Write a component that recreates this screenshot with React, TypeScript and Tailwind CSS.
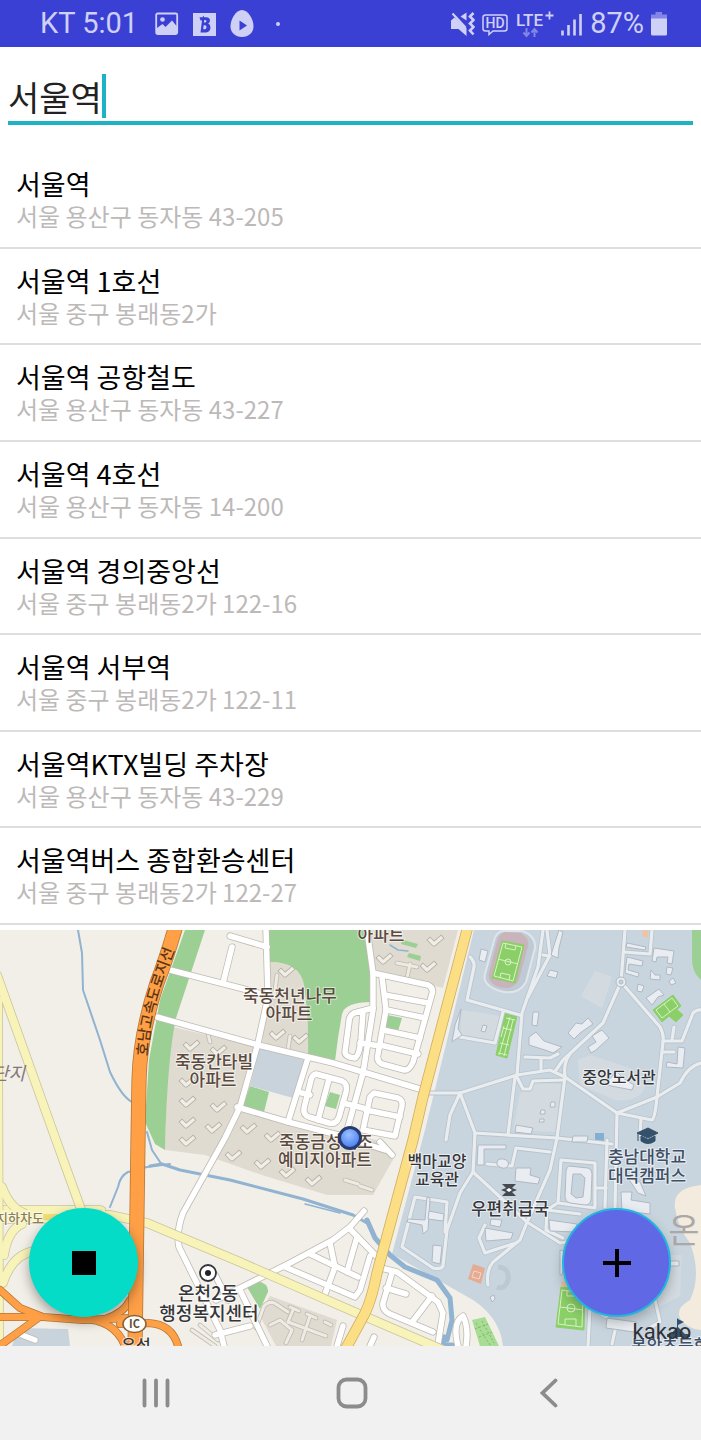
import { useState } from "react";

type Place = { name: string; address: string };

const places: Place[] = [
  { name: "서울역", address: "서울 용산구 동자동 43-205" },
  { name: "서울역 1호선", address: "서울 중구 봉래동2가" },
  { name: "서울역 공항철도", address: "서울 용산구 동자동 43-227" },
  { name: "서울역 4호선", address: "서울 용산구 동자동 14-200" },
  { name: "서울역 경의중앙선", address: "서울 중구 봉래동2가 122-16" },
  { name: "서울역 서부역", address: "서울 중구 봉래동2가 122-11" },
  { name: "서울역KTX빌딩 주차장", address: "서울 용산구 동자동 43-229" },
  { name: "서울역버스 종합환승센터", address: "서울 중구 봉래동2가 122-27" },
];

function StatusBar() {
  return (
    <header className="flex h-[47px] shrink-0 items-center justify-between bg-[#3b40d4] pr-[34px] pl-10 font-[Roboto,'Noto_Sans_CJK_KR',sans-serif] text-[29px] text-[#cfd0f6]">
      <div className="flex items-center gap-[14px]">
        <span className="pr-[3px]">KT 5:01</span>
        <svg width="24" height="24" viewBox="0 0 24 24" fill="none" aria-hidden="true">
          <rect x="1.2" y="1.5" width="21" height="20.5" rx="1.5" stroke="currentColor" strokeWidth="1.8" />
          <path d="M2 16l5.500-4 3 3L17 8.500l5 6V21H2z" fill="currentColor" />
          <circle cx="7.500" cy="7.500" r="2.300" fill="currentColor" />
        </svg>
        <svg width="23" height="24" viewBox="0 0 23 24" aria-hidden="true">
          <path d="M0 1h23v23H0z" fill="currentColor" />
          <path
            d="M6.500 5.200h3l1-1.700.6 1.700h2.400c4 0 4.500 4.800 1.700 6.300 3.500 1.500 3 8.900-2 8.900H7.500L9 8.500H7.500z M11.300 8l-.4 2.500h1.300c1.600 0 1.700-2.500.2-2.500z M10.700 13.200l-.5 4h1.600c2.200 0 2.300-4 .2-4z"
            fill="#3b40d4"
            fillRule="evenodd"
          />
        </svg>
        <svg width="24" height="29" viewBox="0 0 24 29" aria-hidden="true">
          <path d="M12 1C6 1 .5 10 .5 17.300.5 24 5.500 28 12 28s11.500-4 11.500-10.700C23.500 10 18 1 12 1z" fill="currentColor" />
          <path d="M9.500 11.500v10l7.500-5z" fill="#3b40d4" />
        </svg>
        <span className="ml-2 size-1 rounded-full bg-current" />
      </div>
      <div className="flex items-center gap-[7px]">
        <svg width="25" height="26" viewBox="0 0 25 26" fill="none" stroke="currentColor" aria-hidden="true">
          <path d="M1 9.500L4.500 6.500L16.500 17v8L8.500 18H1z M10.500 5.500L16.500 1.500v8z" fill="currentColor" stroke="none" />
          <path d="M2.500 2.500l13 14" strokeWidth="2.200" />
          <path d="M23.500 2l-3.500 3.500 3.500 3.500-3.500 3.500 3.500 3.500-3.500 3.500 3.500 4" strokeWidth="2.600" />
        </svg>
        <svg width="26" height="24" viewBox="0 0 26 24" fill="none" stroke="currentColor" aria-hidden="true">
          <path d="M3.500 3h19q2.500 0 2.500 2.500v11q0 2.500-2.500 2.500H11l-4 3.500V19H3.500Q1 19 1 16.500v-11Q1 3 3.500 3z" strokeWidth="1.500" />
          <text x="13" y="16" textAnchor="middle" fontSize="14" fontWeight="500" fill="currentColor" stroke="none">
            HD
          </text>
        </svg>
        <svg width="39" height="28" viewBox="0 0 39 28" aria-hidden="true">
          <text x="1" y="16" fontSize="17" fontWeight="500" fill="currentColor">
            LTE
          </text>
          <path d="M30.500 5.500h8M34.500 1.500v8" stroke="currentColor" strokeWidth="1.800" />
          <path d="M11.500 18v8M8.500 22.500l3 3.500 3-3.500M19.500 27v-8M16.500 22.500l3-3.500 3 3.500" stroke="#8285e6" strokeWidth="2" fill="none" />
        </svg>
        <svg width="22" height="24" viewBox="0 0 22 24" aria-hidden="true">
          <path d="M1.500 18.500v5M7.500 13v10.500M13.500 7.500v16M19.500 2v21.500" stroke="currentColor" strokeWidth="2.600" />
        </svg>
        <span>87%</span>
        <svg width="16" height="25" viewBox="0 0 16 25" aria-hidden="true">
          <path d="M4.500 1h6.500v2.500h5V8H0V3.500h4.500z" fill="#8285e6" />
          <path d="M0 7.500h16V23q0 1.500-1.500 1.500h-13Q0 24.500 0 23z" fill="currentColor" />
        </svg>
      </div>
    </header>
  );
}

const parks = [
  "M185 930H205L176 1018Q167 1060 165 1150L155 1144L145 1122L149 1060L160 1000Z",
  "M268 930H367L372 1002Q345 1002 342 1014L338 1038L335 1061L308 1057Q309 1020 304 985Q300 962 270 962Z",
  "M387 1015L402 1018L398 1031L385 1027Z",
  "M250 1086L269 1092L264 1112L243 1106Z",
  "M330 1092L340 1095L336 1109L325 1106Z",
  "M247 1287L258 1281Q269 1284 268 1292L260 1309Z",
  "M692 930H701V980Q691 972 692 955Z",
];

const estates = [
  "M173 1027L257 1047L238 1108L385 1142L394 1158L373 1195L327 1195L262 1175L205 1155L165 1150L167 1080Z",
  "M270 962Q300 962 304 985L310 1056L262 1045Z",
  "M368 930H458L443 988L373 971Z",
  "M270 1296L337 1320L331 1346H276L259 1314Z",
];

const lightRoads = [
  "M170 970L240 988L265 995",
  "M232 947L223 983",
  "M230 936L267 947",
  "M266 930L268 997L258 1043L240 1107L225 1138L183 1213Q176 1232 179 1247L220 1330L224 1346",
  "M157 1017L258 1045L333 1063L423 1090",
  "M367 930L373 973V1010L363 1073L346 1134",
  "M373 973L428 985Q434 988 432 994L413 1062Q409 1071 404 1070L382 1064Q376 1061 378 1054L386 1010L382 977",
  "M385 995L428 1003",
  "M387 1010L425 1018",
  "M383 1030L420 1038",
  "M380 1045L418 1054",
  "M373 1008L354 1013Q349 1016 349 1022L345 1052Q345 1057 355 1058Q359 1056 361 1040L363 1012",
  "M360 1043L380 1046",
  "M308 1058L288 1122",
  "M237 1107L288 1122L342 1136L385 1150",
  "M316 1074L342 1081Q348 1084 346 1092L339 1117Q336 1125 329 1123L309 1117Q303 1115 304 1108L311 1080Q312 1075 316 1074Z",
  "M329 1079L318 1120",
  "M298 1092L310 1095",
  "M343 1103L363 1108",
  "M374 1093L398 1098Q403 1100 402 1106L395 1136L363 1130L370 1097Z",
  "M366 1110L400 1117",
  "M380 1142L392 1155",
  "M216 1300L290 1263L333 1240L350 1227L364 1211",
  "M350 1229L378 1258",
  "M357 1237L347 1272",
  "M330 1243L335 1267L325 1294",
  "M310 1254L358 1277",
  "M285 1267L355 1297L360 1290L370 1256",
  "M377 1267L397 1272L438 1302L443 1313L438 1344",
  "M392 1273L383 1303Q382 1310 390 1314L433 1332",
  "M386 1288L406 1294",
  "M432 1296L413 1321",
  "M343 1326L337 1346",
  "M374 1337L370 1346",
  "M240 1290L267 1346",
  "M215 1335L250 1326",
  "M215 1275L228 1300",
  "M22 1335L35 1340",
  "M458 1346Q452 1322 463 1316Q469 1328 466 1346",
];

const estateRoads = [
  "M256 1328L264 1306Q270 1300 276 1304L288 1312",
  "M270 1325L280 1320L292 1330L286 1343",
  "M290 1307L299 1311M307 1314L316 1318M325 1322L331 1325",
  "M288 1322L326 1336",
  "M293 1310L288 1322M310 1316L302 1340",
  "M192 1330L215 1346M200 1325L218 1340",
  "M277 975L274 998M210 1042L207 1030M288 1050L290 1036M407 978L410 964",
  "M397 963L417 967M345 1180L358 1184M360 1186L372 1190",
];

const campusRoads = [
  "M470 957Q475 962 474 967L467 1000L520 1015",
  "M543 930L538 967L522 1013L517 1075",
  "M547 930L550 955L528 997",
  "M543 955L550 956",
  "M625 930L621 982L603 1023L563 1060L556 1070",
  "M621 982L660 1027Q664 1034 663 1042L657 1097Q655 1118 652 1120L617 1113L565 1077L550 1070L517 1075L460 1093L428 1093",
  "M570 1054Q563 1063 565 1077L557 1138",
  "M460 1093L475 1133L507 1135L557 1138L612 1144",
  "M515 1077L508 1135",
  "M617 1113L615 1207",
  "M617 1113L657 1097L680 1083Q688 1066 701 1063",
  "M663 1041H682L693 1013Q697 1009 701 1010",
  "M517 1077L523 1089H530L533 1081L563 1080",
  "M525 1057L550 1058L558 1054M541 1058V1069",
  "M624 952L650 954L652 930",
  "M460 1037L495 1043L503 1012",
  "M674 1027L672 1040",
  "M663 1052H674",
  "M641 1119L640 1135",
  "M460 1093L450 1115L446 1140",
  "M475 1133L473 1172L460 1193L447 1230L443 1266Q441 1270 433 1268L402 1247L415 1197L447 1202L445 1232",
  "M473 1172L527 1222L560 1243L580 1240",
  "M527 1222L520 1240L493 1262Q486 1270 488 1285",
  "M557 1138L550 1170L528 1220",
  "M485 1225L479 1238L485 1253L500 1248L516 1243",
  "M487 1164L512 1166L516 1148L550 1152",
  "M561 1160L595 1163V1208L558 1203Z",
  "M596 1188H606",
  "M547 1207L546 1230L563 1238",
  "M556 1204L547 1210L580 1214",
  "M607 1140L605 1207",
  "M588 1346L590 1308L607 1317",
  "M612 1344L616 1326",
  "M655 1300L660 1322L646 1330",
];

const buildings = [
  "M481 949L488 951L485 962L479 960Z",
  "M627 943L646 947L645 950L626 947Z",
  "M627 957L643 961L642 966L629 964L628 970L639 973L638 977L625 973Z",
  "M654 948L674 951L672 964L667 963L668 957L657 957L656 962L652 961Z",
  "M651 970L655 975L660 975V980L650 979Z",
  "M667 967L673 968L671 975L666 974Z",
  "M669 981L673 978L676 983L671 985Z",
  "M638 984L644 986L642 992L637 991Z",
  "M559 930L563 932L559 948L558 958L551 955L555 942Z",
  "M550 970L558 972L556 978L547 976Z",
  "M533 1012L539 1012L537 1026L532 1025Z",
  "M529 1037L536 1032L544 1041L562 1047L553 1053L545 1050L529 1045Z",
  "M568 1033L576 1023L582 1024L588 1018L593 1024L580 1033L574 1039Z",
  "M592 1036L602 1030L609 1038L596 1050L591 1053L588 1047L596 1042Z",
  "M646 998L659 989L664 995L658 997L652 1005Z",
  "M678 1047L685 1048L683 1068L666 1067L667 1062L677 1064Z",
  "M606 1084L616 1071L623 1078L634 1085L632 1090L611 1086Z",
  "M516 1125L533 1128L531 1134L515 1132Z",
  "M551 1102H555V1107H550ZM541 1110H545V1114H540ZM540 1119H544V1122H539Z",
  "M483 1025L487 1026L485 1032L481 1031Z",
  "M455 1025L461 1009L458 1029L462 1035L452 1042Z",
  "M573 1136H588L587 1142H572Z",
  "M478 1145H506V1149H484V1165L477 1165Z",
  "M497 1165Q496 1158 503 1159Q510 1160 508 1166Q504 1171 497 1165Z",
  "M516 1168L531 1168L530 1175L540 1178L538 1184L515 1181Z",
  "M621 1192L632 1192L631 1200L650 1203L650 1214L622 1211Z",
  "M628 1178L640 1182L646 1196L638 1193Z",
  "M549 1220L577 1224L575 1232L550 1231Z",
  "M485 1228L513 1233L511 1239L486 1241Z",
  "M491 1219L502 1220L500 1227L490 1225Z",
  "M560 1250L566 1252L562 1275L560 1275Z",
  "M670 1261H679V1266H670Z",
  "M427 1197L430 1198L428 1230L423 1234L422 1225L407 1222L408 1219L425 1220Z",
  "M429 1211L444 1214L443 1221L428 1219Z",
  "M433 1245L442 1246L440 1264L432 1262Z",
  "M490 1297L494 1295L495 1299L492 1302Z",
  "M607 1318L636 1322L634 1332L606 1328Z",
];

const blocks = [
  [191, 1047], [218, 1052], [187, 1083], [187, 1103], [218, 1108], [187, 1124], [213, 1129],
  [286, 973], [277, 1036], [300, 1040], [384, 960], [428, 968], [435, 942], [248, 1130],
  [272, 1138], [187, 1142], [233, 1157], [262, 1165], [287, 1174], [313, 1182],
];

const streams = [
  "M78 930L82 953L83 990L100 1040L110 1072Q122 1097 132 1102",
  "M147 1132L152 1150L162 1165M110 1207L118 1187Q120 1176 128 1172L147 1167L170 1164",
];

const ramps = [
  "M0 1290L20 1308L43 1317L83 1320L130 1318",
  "M0 1317H40",
  "M2 1344L38 1318",
  "M83 1319Q115 1320 125 1346",
  "M130 1300Q124 1313 105 1319",
  "M120 1324L148 1323Q172 1324 178 1346",
];

type LabelProps = { x: number; y: number; size?: number; color?: string; children: string };

function Label({ x, y, size = 17, color = "#5a4a3d", children }: LabelProps) {
  return (
    <text
      x={x}
      y={y}
      fontSize={size}
      fill={color}
      textAnchor="middle"
      fontWeight="500"
      stroke="#ffffff"
      strokeOpacity="0.6"
      strokeWidth="2"
      strokeLinejoin="round"
      paintOrder="stroke"
    >
      {children}
    </text>
  );
}

type RoadsProps = { paths: string[]; width: number; fill: string; edge: string };

function Roads({ paths, width, fill, edge }: RoadsProps) {
  return (
    <g fill="none" strokeLinecap="round" strokeLinejoin="round">
      {paths.map((d) => (
        <path key={d} d={d} stroke={edge} strokeWidth={width + 1.6} />
      ))}
      {paths.map((d) => (
        <path key={d} d={d} stroke={fill} strokeWidth={width} />
      ))}
    </g>
  );
}

function MapDrawing() {
  return (
    <svg
      viewBox="0 930 701 416"
      className="block w-full font-['Noto_Sans_CJK_KR',sans-serif]"
      role="img"
      aria-label="지도"
    >
      <path d="M0 930H701V1346H0Z" fill="#f2efe8" />
      <path d="M474 930H701V1346H503Q500 1318 473 1300L392 1254L425 1130Z" fill="#c9d5de" />
      <path d="M701 1185Q672 1188 675 1208Q678 1228 690 1243Q702 1275 690 1300Q674 1309 681 1320Q688 1329 701 1330Z" fill="#f3ebdd" />
      <path d="M595 971L612 977L602 1008L581 996ZM536 1083L561 1084L555 1132L513 1130L520 1094ZM462 1010L500 1016L493 1040L460 1034ZM578 1060L590 1055L630 1068L645 1087Q640 1102 615 1100L580 1085Z" fill="#d3dbe1" />
      <path d="M664 1255H682L680 1296L650 1312L630 1305Z" fill="#d3dbe1" />
      {estates.map((d) => (
        <path key={d} d={d} fill="#dfdbd1" />
      ))}
      {parks.map((d) => (
        <path key={d} d={d} fill="#9ccf93" />
      ))}
      <path d="M260 1047L305 1060L293 1098L250 1086Z" fill="#c8d3dc" />
      <path d="M18 1328L68 1329L70 1346H12Z" fill="#c8d3dc" />

      <g fill="none" stroke="#8fb3d1" strokeLinecap="round" strokeLinejoin="round">
        {streams.map((d) => (
          <path key={d} d={d} strokeWidth="2" />
        ))}
        <path d="M150 1166L162 1164L180 1170L230 1180L303 1199L353 1215L367 1223" strokeWidth="3" />
        <path d="M367 1220L375 1238L390 1255L405 1267L437 1280L450 1298L452 1320L447 1340" strokeWidth="5" />
        <path d="M305 1204L340 1213M390 945L398 950L408 951" strokeWidth="1.500" />
        <path d="M444 1338L440 1346H452" strokeWidth="7" />
      </g>

      <g fill="none" strokeLinejoin="round" strokeLinecap="square">
        {blocks.map(([x, y]) => (
          <g key={`${x}-${y}`} transform={`translate(${x} ${y})`}>
            <path d="M-5 -2L-1 2L6 -4" stroke="#b7b1a6" strokeWidth="5" />
            <path d="M-5 -2L-1 2L6 -4" stroke="#f1eee8" strokeWidth="3.200" />
          </g>
        ))}
      </g>
      <Roads paths={estateRoads} width={3} fill="#eeebe4" edge="#c0bbb1" />
      <path d="M403 940L418 944L416 948L401 944ZM409 953L421 956L420 961L407 957Z" fill="#9ccf93" />

      <path d="M503 931L522 931Q536 936 535 948L526 982Q518 996 500 991Q482 985 485 974L494 941Q496 932 503 931Z" fill="#bfcad4" stroke="#dfe5ea" strokeWidth="2" />
      <path d="M505 932L520 933Q529 937 528 946L519 979Q514 991 499 987Q487 983 489 973L497 942Q499 934 505 932Z" fill="#c8b4ba" />
      <g fill="#8bcf68" stroke="#8bcf68">
        <path d="M502 941L524 945L515 983L492 978Z" />
        <path d="M505 1013L517 1016L507 1058L496 1055Z" />
        <path d="M653 1010L673 995L681 1006L662 1022ZM675 1008L683 1015L676 1022L669 1016Z" />
        <path d="M561 1287L585 1290L584 1330L556 1327Z" />
      </g>
      <path d="M472 1320L485 1317L499 1346H480Z" fill="#a9dc94" />
      <g fill="none" stroke="#d9f2c5" strokeWidth="1">
        <path d="M503 943L522 947L513 981L494 976ZM498 959L518 964M506 943L505 948L515 950L516 946M500 978L501 973L510 975L509 980" />
        <circle cx="508" cy="962" r="3" />
        <path d="M562 1290L583 1293L582 1327L558 1324ZM560 1307L583 1310M567 1291V1296H577V1292M565 1325V1319H576V1326" />
        <circle cx="571" cy="1308" r="4" />
        <path d="M656 1010L672 998L678 1006L662 1018ZM664 1004L670 1012" />
        <path d="M506 1018L515 1020M503 1028L512 1030M500 1043L509 1045M498 1053L507 1055M510 1017L499 1055M504 1026L501 1037M513 1020L504 1056" />
        <path d="M476 1323L490 1345M482 1321L494 1343M475 1329L488 1324M479 1337L492 1332" stroke="#77ba66" strokeDasharray="2 2" />
      </g>
      <path d="M473 1264L485 1268L481 1284L468 1279Z" fill="#e5ac93" />
      <path d="M474 1271L481 1273L479 1279L472 1277Z" fill="none" stroke="#f4d6c8" />
      <path d="M498 1267Q510 1268 508 1280Q505 1290 497 1287" fill="none" stroke="#bec8d2" strokeWidth="5" />
      <path d="M595 1133H604V1141H595Z" fill="#85aed4" />
      <path d="M643 930H648V937H642Z" fill="#efc3a8" />
      <path d="M561 1282L567 1281V1287H561Z" fill="#e5c5ac" />

      <Roads paths={campusRoads} width={3.2} fill="#e9edf0" edge="#b9c4cc" />
      <g fill="#e9edf1" stroke="#afb9c4" strokeWidth="1">
        {buildings.map((d) => (
          <path key={d} d={d} />
        ))}
        <circle cx="621" cy="982" r="5" />
        <circle cx="621" cy="982" r="2" fill="#c9d5de" />
        <path d="M569 1166L588 1168Q592 1169 592 1174L591 1200Q590 1205 585 1205L570 1203Q565 1201 565 1196L566 1171Q567 1166 569 1166ZM573 1174L571 1194L576 1198L583 1197L585 1178L581 1174Z" fillRule="evenodd" />
      </g>

      <Roads paths={lightRoads} width={5.5} fill="#ffffff" edge="#bfbbb5" />
      <Roads
        paths={["M0 1217H100", "M0 1212H100"]}
        width={12}
        fill="#f8f3b8"
        edge="#cbc59d"
      />
      <Roads
        paths={[
          "M-2 1000L-1 1346",
          "M-3 975L56 1140L82 1212",
          "M2 1187Q10 1208 24 1213",
          "M4 1255Q8 1230 22 1224",
          "M3 1283Q12 1255 34 1251",
          "M80 1214L110 1215L147 1223L240 1262L343 1307L443 1350",
        ]}
        width={8}
        fill="#f8f3b8"
        edge="#cbc59d"
      />
      <path d="M0 1210H105V1221H0Z" fill="#f8f3b8" />
      <path d="M43 1217H82" stroke="#f2df7a" strokeWidth="6" />
      <Roads
        paths={["M468 926L423 1097L413 1140L377 1273Q371 1303 363 1317L345 1350"]}
        width={9.5}
        fill="#fcdf84"
        edge="#cfae60"
      />
      <Roads paths={ramps} width={6.5} fill="#ff9f46" edge="#b77735" />
      <Roads
        paths={["M177 922Q167 957 157 983Q140 1035 139 1080L138 1140L135 1350"]}
        width={13.5}
        fill="#ff9f46"
        edge="#b77735"
      />

      <path id="expressway" d="M148 1056Q149 1012 177 944" fill="none" />
      <text fontSize="15" fill="#5b3517" fontWeight="500">
        <textPath href="#expressway">호남고속도로지선</textPath>
      </text>

      <Label x={381} y={941}>아파트</Label>
      <Label x={290} y={1002}>죽동천년나무</Label>
      <Label x={289} y={1020}>아파트</Label>
      <Label x={214} y={1068}>죽동칸타빌</Label>
      <Label x={213} y={1086}>아파트</Label>
      <Label x={326} y={1148}>죽동금성백조</Label>
      <Label x={325} y={1166}>예미지아파트</Label>
      <Label x={437} y={1167} size={16} color="#35363a">백마교양</Label>
      <Label x={437} y={1185} size={16} color="#35363a">교육관</Label>
      <Label x={510} y={1215} color="#35363a">우편취급국</Label>
      <Label x={619} y={1083} size={16} color="#35363a">중앙도서관</Label>
      <Label x={647} y={1163} color="#3d5068">충남대학교</Label>
      <Label x={647} y={1182} color="#3d5068">대덕캠퍼스</Label>
      <Label x={208} y={1300} size={18} color="#35363a">온천2동</Label>
      <Label x={209} y={1320} size={18} color="#35363a">행정복지센터</Label>
      <Label x={20} y={1223} size={13} color="#8b8055">지하차도</Label>
      <Label x={136} y={1351} size={16} color="#35363a">유성</Label>
      <Label x={678} y={1352} size={17} color="#3d5068">봉암초등학교</Label>
      <text x="25" y="1080" fontSize="18" fill="#85777a" textAnchor="end" fontStyle="italic">단지</text>
      <text x="684" y="1243" fontSize="34" fill="#aaa8a9" textAnchor="middle">온</text>

      <ellipse cx="134.500" cy="1324" rx="11.500" ry="8.500" fill="#fffdf7" stroke="#86603c" strokeWidth="1.500" />
      <text x="134.500" y="1328" fontSize="11" fontWeight="700" textAnchor="middle" fill="#5d4c3e">IC</text>

      <circle cx="208" cy="1273" r="8" fill="#ffffff" stroke="#333437" strokeWidth="1.800" />
      <circle cx="208" cy="1273" r="3" fill="#222326" />

      <path d="M502 1184H516L512 1188L517 1190L512 1192L516 1196H502L506 1192L501 1190L506 1188Z" fill="#444a50" />
      <path d="M506 1190L509 1188L512 1190L509 1192Z" fill="#ffffff" />
      <path d="M637 1133L648 1128L658 1133L648 1138Z M641 1136L648 1139.500L655 1136V1141Q648 1146 641 1141Z M638 1134V1141" fill="#34516c" stroke="#34516c" strokeWidth="1" />
      <path d="M678 1319L684 1322L678 1325V1327L685 1334H671L677 1327V1318ZM667 1334H690V1337H667Z" fill="#34516c" />

      <defs>
        <radialGradient id="position" cx="45%" cy="35%" r="65%">
          <stop offset="0" stopColor="#9cc0ff" />
          <stop offset="1" stopColor="#437bf0" />
        </radialGradient>
      </defs>
      <circle cx="350" cy="1138" r="10.500" fill="url(#position)" stroke="#273b70" strokeWidth="3" />
      <text x="662" y="1339" fontSize="22" fill="#303238" textAnchor="middle" fontFamily="Roboto, sans-serif">
        kakao
      </text>
    </svg>
  );
}

function NavigationBar() {
  return (
    <nav className="grid h-[94px] shrink-0 grid-cols-3 items-center justify-items-center bg-[#f1f1f1] pr-[54px] pl-[58px] text-[#8c8c8c]">
      <button type="button" aria-label="최근 앱">
        <svg width="30" height="32" viewBox="0 0 30 32" stroke="currentColor" strokeWidth="3.800" strokeLinecap="round">
          <path d="M3.500 3.500v25M15 3.500v25M26.500 3.500v25" />
        </svg>
      </button>
      <button type="button" aria-label="홈">
        <svg width="32" height="32" viewBox="0 0 32 32" fill="none" stroke="currentColor" strokeWidth="3.800">
          <rect x="2.500" y="2.500" width="27" height="27" rx="8" />
        </svg>
      </button>
      <button type="button" aria-label="뒤로">
        <svg width="18" height="32" viewBox="0 0 18 32" fill="none" stroke="currentColor" strokeWidth="3.800" strokeLinecap="round">
          <path d="M15.500 3.500L2.500 16l13 12.500" />
        </svg>
      </button>
    </nav>
  );
}

export default function App() {
  const [query, setQuery] = useState("서울역");

  return (
    <div className="flex min-h-screen flex-col bg-white font-['Noto_Sans_CJK_KR',sans-serif]">
      <StatusBar />
      <div className="px-2 pt-6 pb-[27px]">
        <label className="flex h-[54px] cursor-text items-start border-b-4 border-[#1fb2c4] pt-[3px]">
          <input
            type="text"
            aria-label="장소 검색"
            value={query}
            onChange={(e) => setQuery(e.target.value)}
            className="h-11 field-sizing-content max-w-full bg-transparent text-[34px] text-[#222] caret-transparent outline-none"
          />
          <span className="h-11 w-1 bg-[#1fb2c4]" />
        </label>
      </div>
      <ul className="grid flex-1 auto-rows-fr">
        {places.map((place) => (
          <li key={place.name} className="border-b-2 border-[#dedede]">
            <button type="button" className="block w-full px-4 pt-4 pb-3 text-left">
              <span className="block text-[27px] leading-8 text-black">{place.name}</span>
              <span className="block text-[24px] leading-8 text-[#bdb9b9]">{place.address}</span>
            </button>
          </li>
        ))}
      </ul>
      <main className="relative mt-[5px] shrink-0 overflow-hidden">
        <MapDrawing />
        <button
          type="button"
          aria-label="정지"
          className="absolute bottom-[29px] left-[29px] flex size-[109px] items-center justify-center rounded-full bg-[#04dcc8] shadow-[0_5px_12px_rgba(0,0,0,0.35)]"
        >
          <span className="size-6 bg-black" />
        </button>
        <button
          type="button"
          aria-label="추가"
          className="absolute right-[30px] bottom-[29px] flex size-[109px] items-center justify-center rounded-full border-2 border-[#22b5e0] bg-[#6068e6] shadow-[0_5px_12px_rgba(0,0,0,0.25)]"
        >
          <svg width="28" height="28" viewBox="0 0 28 28" stroke="#000" strokeWidth="4" aria-hidden="true">
            <path d="M14 0v28M0 14h28" />
          </svg>
        </button>
      </main>
      <NavigationBar />
    </div>
  );
}
